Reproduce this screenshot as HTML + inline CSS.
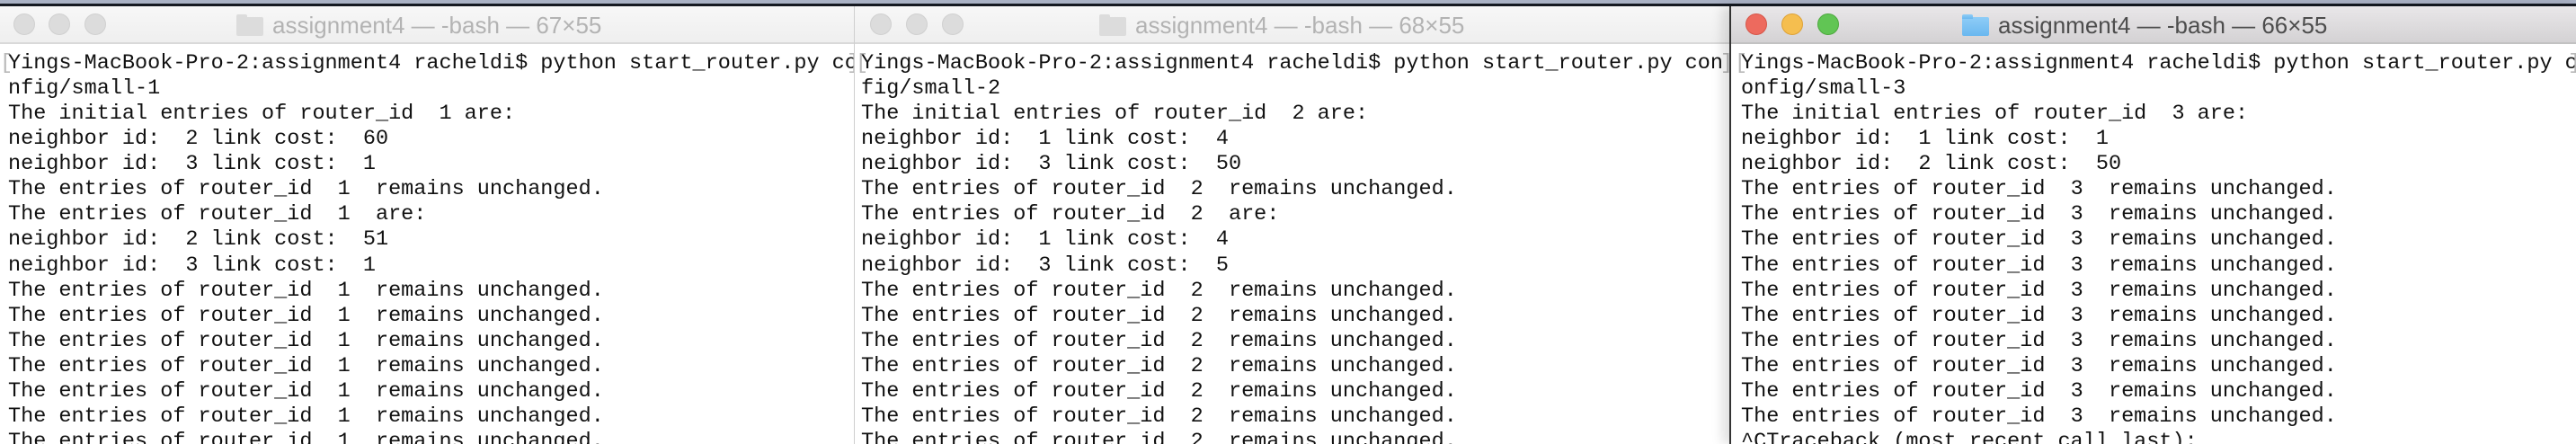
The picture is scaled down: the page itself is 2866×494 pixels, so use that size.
<!DOCTYPE html>
<html><head><meta charset="utf-8"><style>
*{margin:0;padding:0;box-sizing:border-box}
html,body{width:2866px;height:494px;overflow:hidden;background:#fff}
.top{position:absolute;left:0;top:0;width:2866px;height:4px;background:#a9b1c4}
.top2{position:absolute;left:0;top:4px;width:2866px;height:3px;background:#141820}
.win{position:absolute;top:7px;height:487px;background:#fff;overflow:hidden}
.tb{position:absolute;left:0;top:0;right:0;height:42px;background:linear-gradient(#f7f7f7,#efefef);border-bottom:2px solid #d9d9d9}
.act .tb{background:linear-gradient(#e9e7e9,#d4d2d4);border-bottom:2px solid #c2c2c2}
.dot{position:absolute;top:8px;width:24px;height:24px;border-radius:50%;background:#dcdcdc;border:1px solid #d0d0d0}
.title{position:absolute;top:4px;font:26px "Liberation Sans",sans-serif;color:#b3b3b3;white-space:nowrap;line-height:34px}
.act .title{color:#4d4d4d}
.folder{position:absolute;top:12px;width:30px;height:21px;background:#dcdcdc;border-radius:2px}
.folder:before{content:"";position:absolute;left:0;top:-3px;width:12px;height:5px;background:inherit;border-radius:2px 2px 0 0}
.act .folder{background:linear-gradient(#8fcdf7,#6ab8ef)}
pre{position:absolute;top:50px;font:23.5px/28.07px "Liberation Mono",monospace;color:#111;white-space:pre}
.br{position:absolute;top:50px;font:23.5px/28.07px "Liberation Mono",monospace;color:#b8b8b8}
</style></head><body>
<div class="top"></div><div class="top2"></div>

<div class="win" style="left:0;width:951px">
 <div class="tb"></div>
 <div class="dot" style="left:15px"></div><div class="dot" style="left:54px"></div><div class="dot" style="left:94px"></div>
 <div class="folder" style="left:263px"></div>
 <div class="title" style="left:303px">assignment4 — -bash — 67×55</div>
 <div class="br" style="left:0">[</div>
 <pre style="left:9px">Yings-MacBook-Pro-2:assignment4 racheldi$ python start_router.py co
nfig/small-1
The initial entries of router_id  1 are:
neighbor id:  2 link cost:  60
neighbor id:  3 link cost:  1
The entries of router_id  1  remains unchanged.
The entries of router_id  1  are:
neighbor id:  2 link cost:  51
neighbor id:  3 link cost:  1
The entries of router_id  1  remains unchanged.
The entries of router_id  1  remains unchanged.
The entries of router_id  1  remains unchanged.
The entries of router_id  1  remains unchanged.
The entries of router_id  1  remains unchanged.
The entries of router_id  1  remains unchanged.
The entries of router_id  1  remains unchanged.</pre>
 <div class="br" style="left:942px">]</div>
</div>

<div class="win" style="left:950px;width:976px;border-left:1px solid #cfcfcf">
 <div class="tb"></div>
 <div class="dot" style="left:17px"></div><div class="dot" style="left:57px"></div><div class="dot" style="left:97px"></div>
 <div class="folder" style="left:272px"></div>
 <div class="title" style="left:312px">assignment4 — -bash — 68×55</div>
 <div class="br" style="left:1px">[</div>
 <pre style="left:7px">Yings-MacBook-Pro-2:assignment4 racheldi$ python start_router.py con
fig/small-2
The initial entries of router_id  2 are:
neighbor id:  1 link cost:  4
neighbor id:  3 link cost:  50
The entries of router_id  2  remains unchanged.
The entries of router_id  2  are:
neighbor id:  1 link cost:  4
neighbor id:  3 link cost:  5
The entries of router_id  2  remains unchanged.
The entries of router_id  2  remains unchanged.
The entries of router_id  2  remains unchanged.
The entries of router_id  2  remains unchanged.
The entries of router_id  2  remains unchanged.
The entries of router_id  2  remains unchanged.
The entries of router_id  2  remains unchanged.</pre>
 <div class="br" style="left:963px">]</div>
</div>

<div class="win act" style="left:1924px;width:942px;border-left:2px solid #333;box-shadow:-8px 0 12px rgba(0,0,0,0.12)">
 <div class="tb"></div>
 <div class="dot" style="left:16px;background:#ed6a5e;border-color:#d65548"></div>
 <div class="dot" style="left:56px;background:#f5be4f;border-color:#dea236"></div>
 <div class="dot" style="left:96px;background:#61c554;border-color:#4ea93f"></div>
 <div class="folder" style="left:257px"></div>
 <div class="title" style="left:297px">assignment4 — -bash — 66×55</div>
 <div class="br" style="left:4px">[</div>
 <pre style="left:11px">Yings-MacBook-Pro-2:assignment4 racheldi$ python start_router.py c
onfig/small-3
The initial entries of router_id  3 are:
neighbor id:  1 link cost:  1
neighbor id:  2 link cost:  50
The entries of router_id  3  remains unchanged.
The entries of router_id  3  remains unchanged.
The entries of router_id  3  remains unchanged.
The entries of router_id  3  remains unchanged.
The entries of router_id  3  remains unchanged.
The entries of router_id  3  remains unchanged.
The entries of router_id  3  remains unchanged.
The entries of router_id  3  remains unchanged.
The entries of router_id  3  remains unchanged.
The entries of router_id  3  remains unchanged.
^CTraceback (most recent call last):</pre>
 <div class="br" style="left:931px">]</div>
</div>
</body></html>
